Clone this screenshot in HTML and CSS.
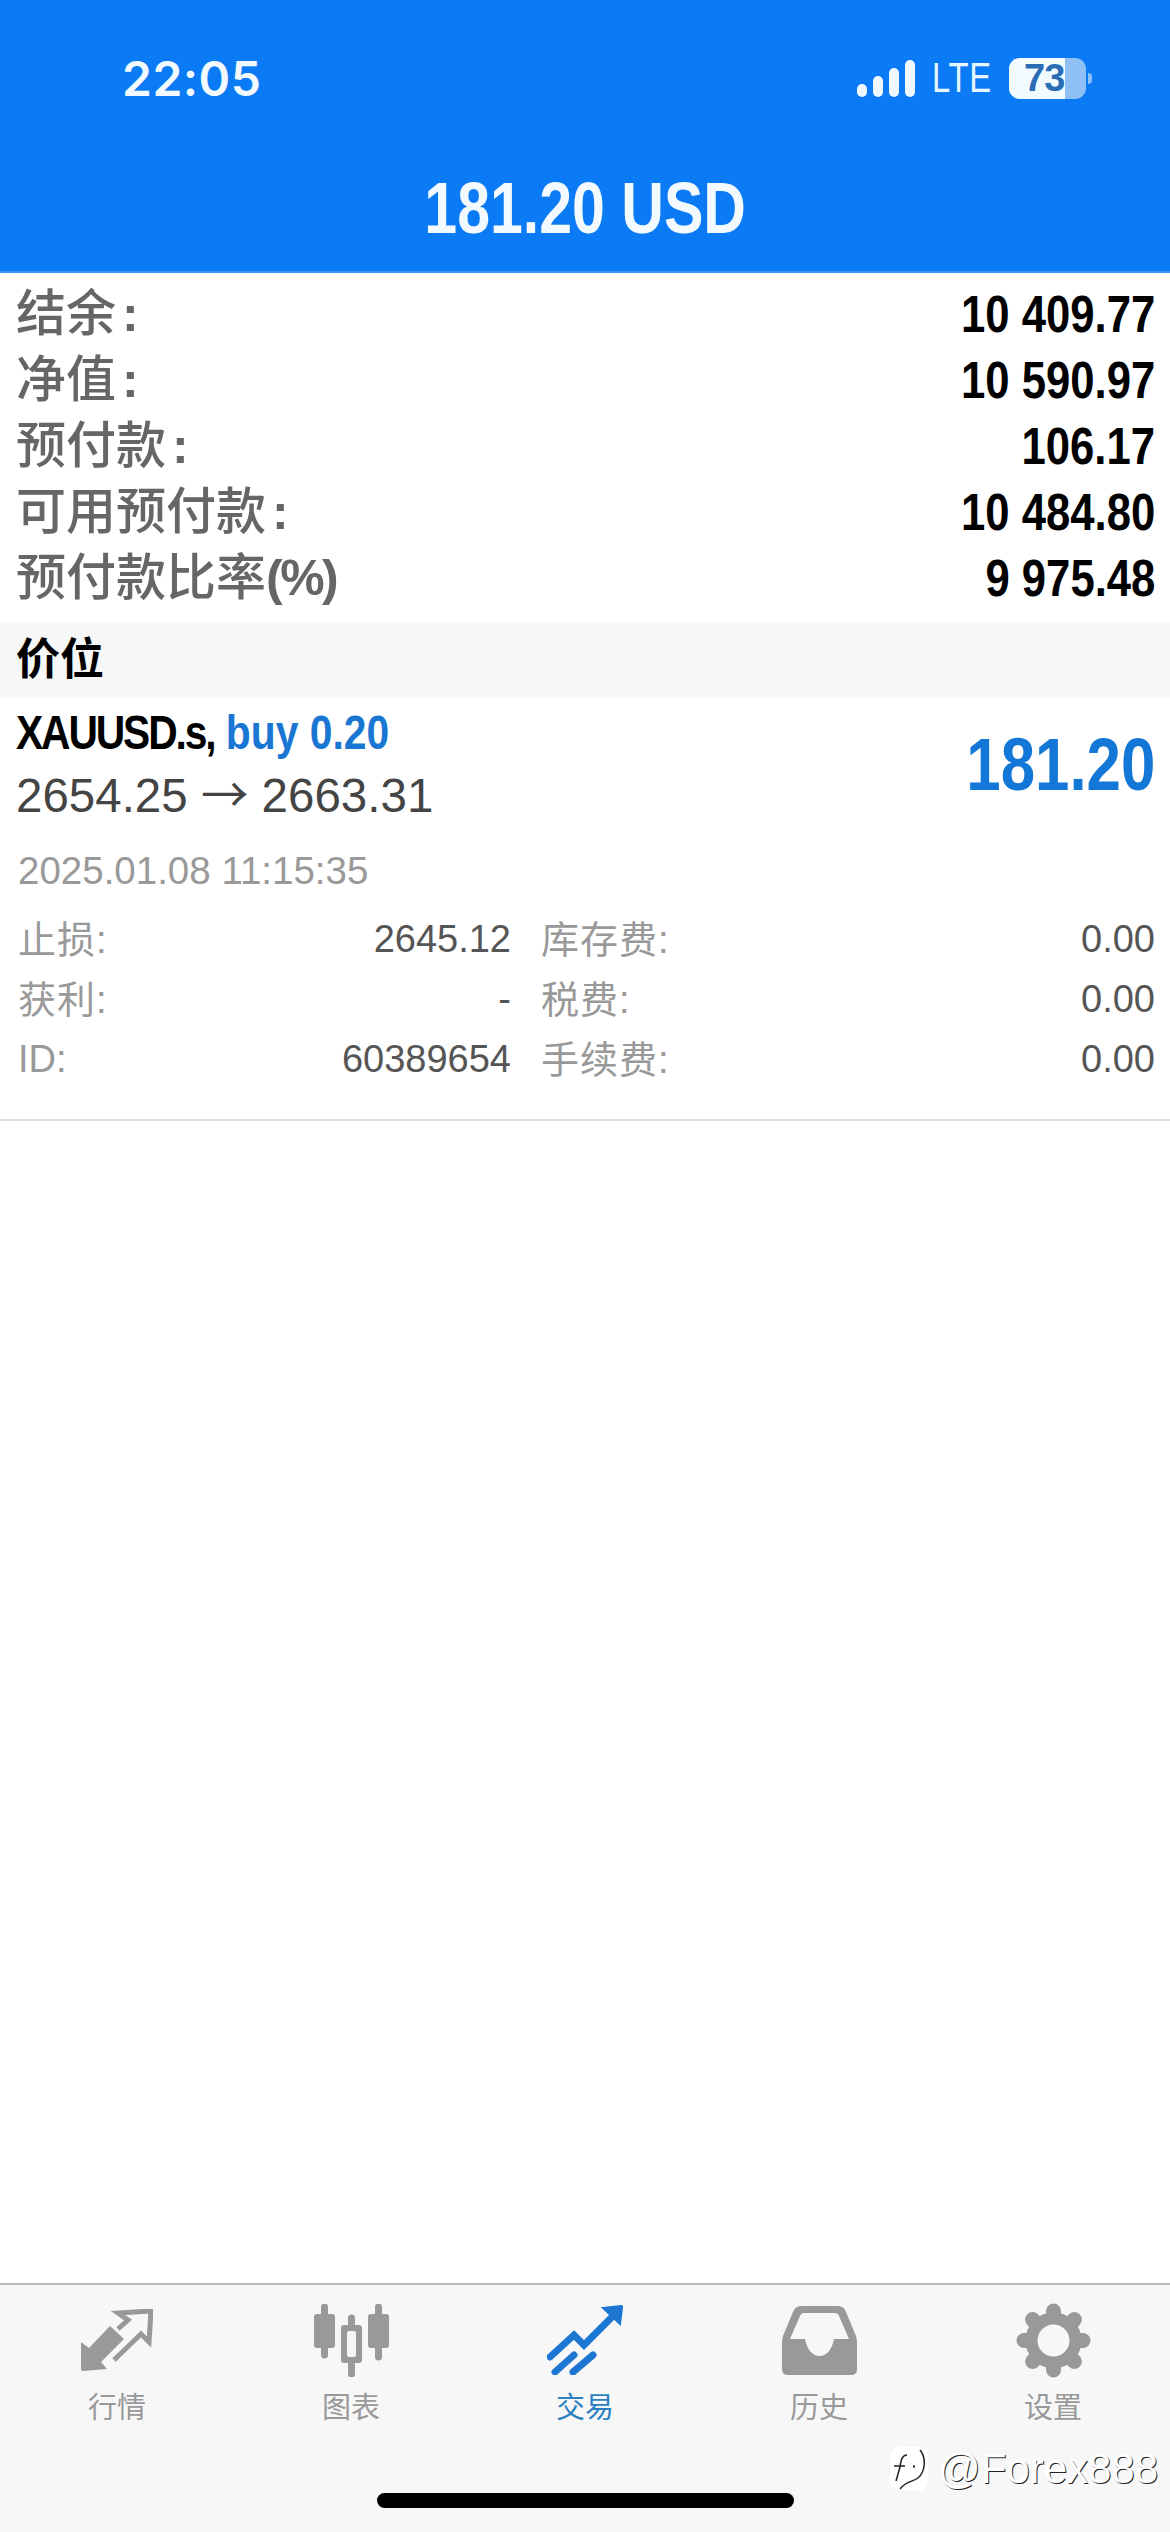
FILE: index.html
```html
<!DOCTYPE html>
<html lang="zh">
<head>
  <meta charset="UTF-8">
  <title>交易</title>
  <link rel="stylesheet" href="styles.css">
</head>
<body>
  <div class="page">
    <header class="top">
      <div class="status">
        <span class="clock">22:05</span>
        <div class="status-right">
          <div class="signal"><i class="b1"></i><i class="b2"></i><i class="b3"></i><i class="b4"></i></div>
          <span class="lte">LTE</span>
          <div class="battery"><div class="battery-fill"><span>73</span></div></div>
          <i class="battery-nub"></i>
        </div>
      </div>
      <h1 class="total"><span>181.20 USD</span></h1>
    </header>

    <section class="summary">
      <div class="row"><span class="label">结余<span class="colon">:</span></span><span class="value">10 409.77</span></div>
      <div class="row"><span class="label">净值<span class="colon">:</span></span><span class="value">10 590.97</span></div>
      <div class="row"><span class="label">预付款<span class="colon">:</span></span><span class="value">106.17</span></div>
      <div class="row"><span class="label">可用预付款<span class="colon">:</span></span><span class="value">10 484.80</span></div>
      <div class="row"><span class="label">预付款比率<span class="pct">(%)</span></span><span class="value">9 975.48</span></div>
    </section>

    <h2 class="section-title">价位</h2>

    <section class="position">
      <div class="position-top">
        <div>
          <div class="symbol"><span class="symbol-name">XAUUSD.s,</span> <span class="side">buy 0.20</span></div>
          <div class="prices">2654.25 <span class="arrow">→</span> 2663.31</div>
        </div>
        <div class="profit">181.20</div>
      </div>
      <div class="date">2025.01.08 11:15:35</div>
      <div class="details">
        <div class="detail"><span class="cjk">止损:</span><b>2645.12</b></div>
        <div class="detail"><span class="cjk">库存费:</span><b>0.00</b></div>
        <div class="detail"><span class="cjk">获利:</span><b>-</b></div>
        <div class="detail"><span class="cjk">税费:</span><b>0.00</b></div>
        <div class="detail"><span>ID:</span><b>60389654</b></div>
        <div class="detail"><span class="cjk">手续费:</span><b>0.00</b></div>
      </div>
    </section>

    <div class="spacer"></div>

    <nav class="tabs">
      <div class="tab">
        <div class="tab-icon">
          <svg width="72" height="62" viewBox="0 0 72 62">
            <path d="M0 33L8 39L29 17L43 30L20 53L26 60L2 62Q0 62 0 60Z" fill="#999"/>
            <path d="M37 20L47 11L37 4L70 2L68 33L60 25L33 51" fill="none" stroke="#999" stroke-width="5"/>
          </svg>
        </div>
        <span>行情</span>
      </div>
      <div class="tab">
        <div class="tab-icon">
          <svg width="75" height="73" viewBox="0 0 75 73">
            <path d="M10.500 3V51M37.500 14V70M64.500 3V53" stroke="#999" stroke-width="7" stroke-linecap="round"/>
            <rect x="0" y="10" width="21" height="34" rx="3" fill="#999"/>
            <rect x="27" y="21" width="21" height="38" rx="3" fill="#999"/>
            <rect x="33" y="27" width="9" height="26" rx="2" fill="#f7f7f7"/>
            <rect x="54" y="10" width="21" height="34" rx="3" fill="#999"/>
          </svg>
        </div>
        <span>图表</span>
      </div>
      <div class="tab active">
        <div class="tab-icon">
          <svg width="76" height="70" viewBox="0 0 76 70">
            <path d="M3 52L27 30L37 40L68 9M8 67L27 50M26 67L46 50" fill="none" stroke="#1d76d2" stroke-width="7" stroke-linecap="round"/>
            <path d="M56 3L74 1Q76 1 75 3L73 19Z" fill="#1d76d2" stroke="#1d76d2" stroke-width="2"/>
          </svg>
        </div>
        <span>交易</span>
      </div>
      <div class="tab">
        <div class="tab-icon">
          <svg width="75" height="69" viewBox="0 0 75 69">
            <path fill-rule="evenodd" fill="#999" d="M19 0H56Q62 0 64 6L74 30Q75 33 75 37V63Q75 69 69 69H6Q0 69 0 63V37Q0 33 1 30L11 6Q13 0 19 0ZM22 7Q19 7 18 10L8 33H23C25 44 31 50 37.500 50C44 50 50 44 52 33H67L57 10Q56 7 53 7Z"/>
          </svg>
        </div>
        <span>历史</span>
      </div>
      <div class="tab">
        <div class="tab-icon">
          <svg width="75" height="75" viewBox="0 0 75 75">
            <circle cx="37.500" cy="37.500" r="22" fill="none" stroke="#999" stroke-width="12"/>
            <g stroke="#999" stroke-width="15" stroke-linecap="round">
              <path d="M37.500 8V12M37.500 63V67M8 37.500H12M63 37.500H67M16.600 16.600L19.500 19.500M55.500 55.500L58.400 58.400M58.400 16.600L55.500 19.500M19.500 55.500L16.600 58.400"/>
            </g>
          </svg>
        </div>
        <span>设置</span>
      </div>
      <div class="home-bar"></div>
      <div class="watermark">
        <div class="watermark-logo">
          <svg width="36" height="44" viewBox="0 0 36 44">
            <path d="M30 3C36 10 36 24 28 31C23 35 16 34 10 42M17 8C12 8 11 13 10 20L6 34M4 19H15M24 18V21" fill="none" stroke="#222" stroke-width="1.500"/>
          </svg>
        </div>
        <span>@Forex888</span>
      </div>
    </nav>
  </div>
</body>
</html>
```

FILE: styles.css
```css
* { box-sizing: border-box; }
body { margin: 0; background: #fff; font-family: "Liberation Sans", "Noto Sans CJK SC", sans-serif; }
.page { position: relative; display: flex; flex-direction: column; height: 2532px; overflow: hidden; }

/* blue header */
.top { height: 273px; background: #0a7bf5; color: #fff; border-bottom: 2px solid #3a95ee; padding-top: 40px; }
.status { display: flex; justify-content: space-between; align-items: center; height: 76px; padding: 0 78px 0 122px; }
.clock { font-family: Inter, sans-serif; font-size: 48px; font-weight: 600; letter-spacing: .5px; color: #f2faff; }
.status-right { display: flex; align-items: center; }
.signal { display: flex; align-items: flex-end; gap: 6px; height: 37px; }
.signal i { display: block; width: 10px; background: #eefaff; border-radius: 5px; }
.b1 { height: 13px; }
.b2 { height: 21px; }
.b3 { height: 29px; }
.b4 { height: 37px; }
.lte { display: inline-block; font-size: 42px; line-height: 42px; letter-spacing: 1px; margin-right: 17px; color: #e8f7ff; transform: scaleX(.78); transform-origin: right center; }
.battery { width: 77px; height: 41px; background: #8fc0f5; border-radius: 11px; overflow: hidden; }
.battery-fill { width: 56px; height: 41px; background: #f2fbff; display: flex; align-items: center; padding-left: 15px; }
.battery-fill span { font-size: 38px; font-weight: bold; color: #2a6db5; letter-spacing: -1px; }
.battery-nub { width: 4px; height: 11px; margin-left: 2px; background: #8fc0f5; border-radius: 0 4px 4px 0; }
.total { margin: 0; padding-top: 42px; text-align: center; font-size: 72px; line-height: 100px; font-weight: bold; color: #f2faff; }
.total span { display: inline-block; transform: scaleX(.82); }

/* account summary */
.summary { height: 349px; padding: 8px 15px 0 16px; }
.row { display: flex; justify-content: space-between; align-items: center; height: 66px; }
.label { font-size: 50px; font-weight: 500; padding-bottom: 10px; color: #666; }
.colon { margin-left: 6px; font-weight: bold; }
.pct { font-weight: bold; letter-spacing: -2.500px; }
.value { display: inline-block; font-size: 52px; font-weight: bold; color: #000; transform: scaleX(.84); transform-origin: right center; }

.section-title { margin: 0; height: 76px; padding-left: 16px; background: #f6f7f7; font-size: 44px; line-height: 76px; font-weight: 700; color: #000; }

/* open position */
.position { padding: 3px 15px 30px 16px; border-bottom: 2px solid #ddd; }
.position-top { display: flex; justify-content: space-between; align-items: center; }
.symbol { font-size: 48px; line-height: 64px; font-weight: bold; color: #000; transform: scaleX(.85); transform-origin: left center; white-space: nowrap; }
.symbol-name { letter-spacing: -2.500px; }
.side { color: #1976d2; }
.prices { font-size: 47.500px; line-height: 62px; color: #444; }
.arrow { font-family: "Noto Sans CJK SC", sans-serif; line-height: 0; }
.profit { font-size: 74px; font-weight: bold; color: #1277d6; transform: scaleX(.835); transform-origin: right center; }
.date { margin: 19px 0 0 2px; font-size: 38.500px; line-height: 50px; color: #999; }
.details { display: grid; grid-template-columns: 493px 1fr; column-gap: 30px; margin: 13px 0 0 2px; }
.detail { display: flex; justify-content: space-between; align-items: center; height: 60px; font-size: 38px; }
.detail span { color: #999; }
.detail .cjk { padding-bottom: 6px; letter-spacing: 1px; }
.detail b { font-weight: normal; color: #555; }

.spacer { flex: 1; }

/* bottom tabs */
.tabs { position: relative; display: grid; grid-template-columns: repeat(5, 1fr); height: 249px; background: #f7f7f7; border-top: 2px solid #bbb; padding-top: 17px; }
.tab { display: flex; flex-direction: column; align-items: center; font-size: 29px; color: #999; }
.tab-icon { display: flex; align-items: center; justify-content: center; height: 76px; margin-bottom: 6px; }
.tab.active { color: #2a7fc0; }
.home-bar { position: absolute; left: 377px; bottom: 24px; width: 417px; height: 15px; background: #000; border-radius: 8px; }
.watermark { position: absolute; left: 890px; top: 162px; display: flex; align-items: center; gap: 10px; font-size: 42px; line-height: 44px; color: #fff; text-shadow: 1px 1px 0 #222; }
.watermark-logo { display: flex; width: 38px; height: 44px; background: #fff; border-radius: 10px; }
```
